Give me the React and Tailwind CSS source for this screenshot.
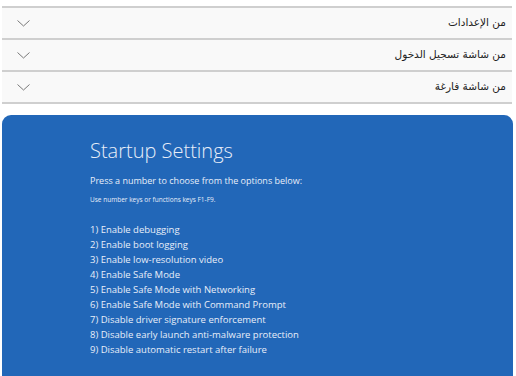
const rows = ['من الإعدادات', 'من شاشة تسجيل الدخول', 'من شاشة فارغة']

const options = [
  '1) Enable debugging',
  '2) Enable boot logging',
  '3) Enable low-resolution video',
  '4) Enable Safe Mode',
  '5) Enable Safe Mode with Networking',
  '6) Enable Safe Mode with Command Prompt',
  '7) Disable driver signature enforcement',
  '8) Disable early launch anti-malware protection',
  '9) Disable automatic restart after failure',
]

function Chevron() {
  return (
    <svg width="13" height="7" viewBox="0 0 13 7" fill="none" className="text-[#7a7a7a]">
      <path d="M0.5 0.5 L6.5 6 L12.5 0.5" stroke="currentColor" strokeWidth="1" />
    </svg>
  )
}

export default function App() {
  return (
    <div className="w-[516px] h-[376px] overflow-hidden bg-white pt-[6px] font-['Liberation_Sans',sans-serif]">
      <div className="ml-[2px] w-[510px] border-t-2 border-[#cfcfcf]">
        {rows.map((r) => (
          <div
            key={r}
            className="flex h-[32px] items-center justify-between border-b-2 border-[#cfcfcf] bg-[#f9f9f9] pl-[15px] pr-[6px]"
          >
            <Chevron />
            <span dir="rtl" className="text-[10.5px] text-[#222] font-['DejaVu_Sans',sans-serif]">
              {r}
            </span>
          </div>
        ))}
      </div>

      <div className="ml-[2px] mt-[11px] h-[300px] w-[511px] rounded-t-[9px] bg-[#2267b8] pl-[88px] pt-[22px] font-['Open_Sans',sans-serif] text-[#e8eef8]">
        <h1 className="text-[20px] font-light leading-[28px]">Startup Settings</h1>
        <p className="mt-[10px] text-[9px] leading-[12px]">Press a number to choose from the options below:</p>
        <p className="mt-[8px] text-[6.5px] leading-[9px]">Use number keys or functions keys F1-F9.</p>
        <ul className="mt-[18px]">
          {options.map((o) => (
            <li key={o} className="text-[9.5px] leading-[15px]">
              {o}
            </li>
          ))}
        </ul>
      </div>
    </div>
  )
}
